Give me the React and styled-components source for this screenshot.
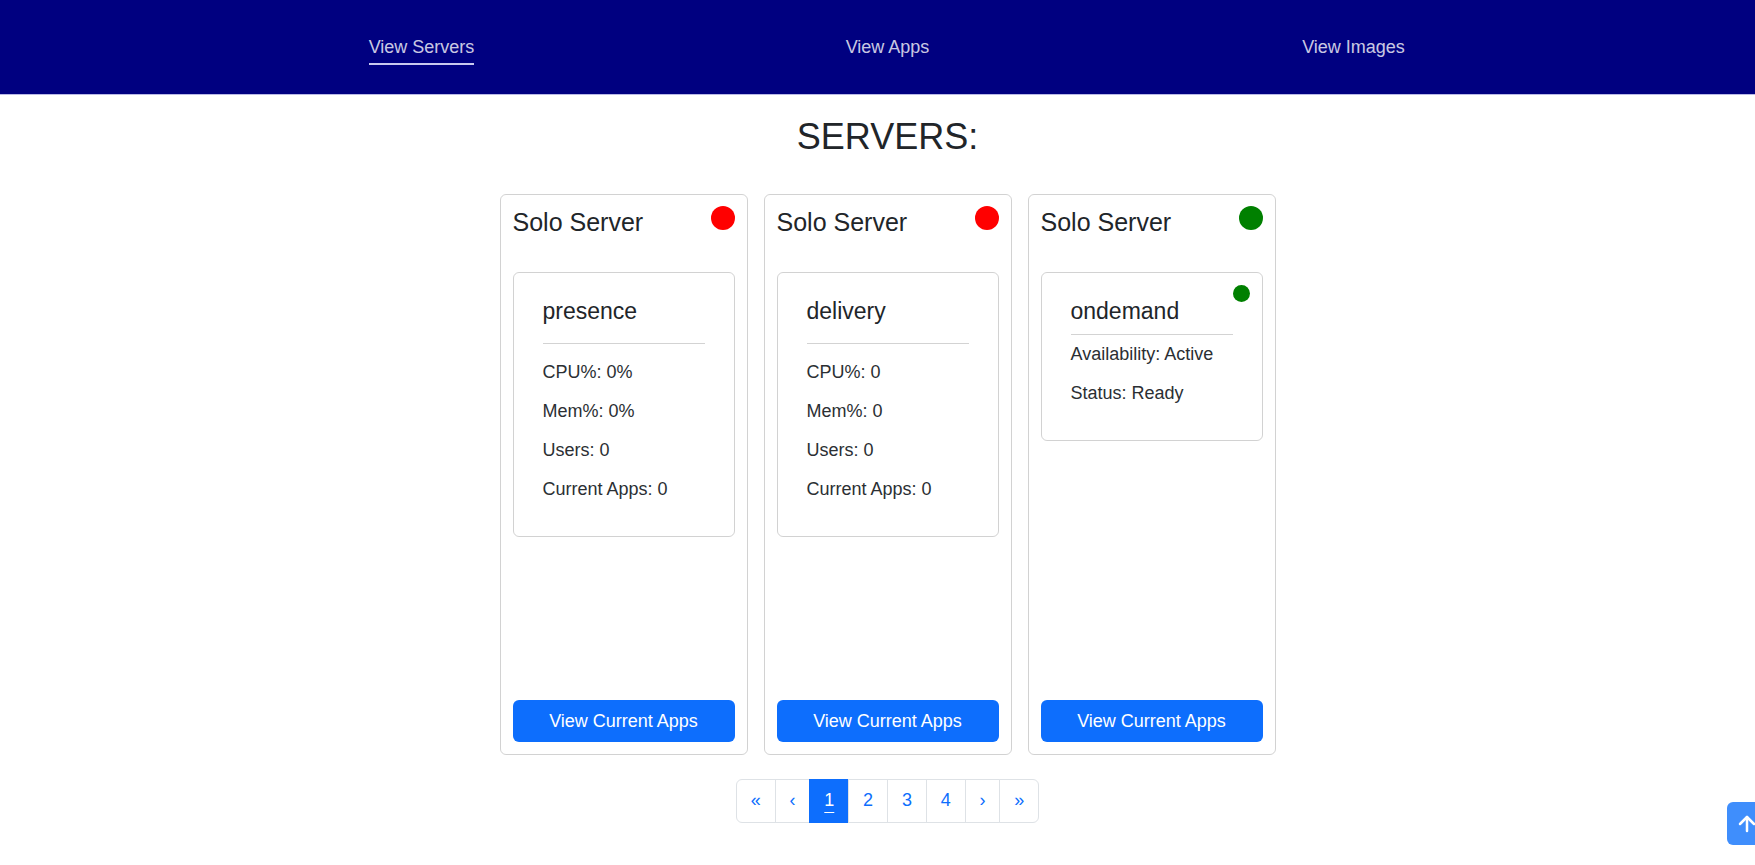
import React from "react"
import styled, { createGlobalStyle } from "styled-components"
import { ArrowUp } from "lucide-react"

const GlobalStyle = createGlobalStyle`
  html {
    overflow-x: hidden;
  }

  body {
    margin: 0;
    background: #fff;
    color: #212529;
    font-family: "Liberation Sans", Arial, sans-serif;
  }
`

const NavBar = styled.nav`
  background-color: #000080;
  border-bottom: 1px solid #b9b9e6;
  height: 94px;
  padding-left: 20px;
  box-sizing: content-box;
`

const NavList = styled.ul`
  display: grid;
  grid-template-columns: repeat(3, 466px);
  justify-content: center;
  justify-items: center;
  list-style: none;
  margin: 0;
  padding: 37px 0 0;
`

const NavLink = styled.a`
  display: block;
  font-size: 18px;
  line-height: 21px;
  padding-bottom: 5px;
  color: rgba(255, 255, 255, 0.8);
  text-decoration: none;
  border-bottom: 2px solid ${p => (p.$active ? "#c8c8ee" : "transparent")};
  cursor: pointer;
`

const Main = styled.main`
  padding-left: 20px;
  display: flex;
  flex-direction: column;
  align-items: center;
`

const Title = styled.h1`
  margin: 20px 0 36px;
  font-size: 36px;
  font-weight: 400;
  line-height: 43px;
  color: #212529;
`

const CardGrid = styled.div`
  display: grid;
  grid-template-columns: repeat(3, 248px);
  gap: 16px;
`

const ServerCard = styled.div`
  display: flex;
  flex-direction: column;
  box-sizing: border-box;
  height: 561px;
  padding: 12px;
  border: 1px solid rgba(0, 0, 0, 0.175);
  border-radius: 6px;
`

const CardHeader = styled.div`
  display: flex;
  justify-content: space-between;
  align-items: flex-start;
`

const CardTitle = styled.h4`
  margin: 0;
  font-size: 25px;
  font-weight: 400;
  line-height: 30px;
`

const StatusDot = styled.span`
  display: block;
  width: ${p => p.$size}px;
  height: ${p => p.$size}px;
  border-radius: 50%;
  background: ${p => (p.$on ? "#008000" : "#ff0000")};
  margin-top: -1px;
`

const AppCard = styled.div`
  position: relative;
  margin-top: 35px;
  padding: 25px 29px 21px;
  border: 1px solid rgba(0, 0, 0, 0.175);
  border-radius: 6px;
`

const AppDot = styled(StatusDot)`
  position: absolute;
  top: 12px;
  right: 12px;
  margin: 0;
`

const AppName = styled.h5`
  margin: 0;
  font-size: 23px;
  font-weight: 400;
  line-height: 27.6px;
`

const Rule = styled.hr`
  margin: ${p => (p.$compact ? "8px 0 6px" : "17px 0 15px")};
  border: 0;
  border-top: 1px solid #d3d3d3;
`

const Stat = styled.p`
  margin: 0 0 12px;
  font-size: 18px;
  line-height: 27px;
  color: #2b2f33;
`

const ActionButton = styled.button`
  margin-top: auto;
  height: 42px;
  border: 0;
  border-radius: 6px;
  background-color: #0d6efd;
  color: #fff;
  font-family: inherit;
  font-size: 18px;
  cursor: pointer;
`

const Pager = styled.ul`
  display: flex;
  list-style: none;
  margin: 24px 0 40px;
  padding: 0;
`

const PageItem = styled.li`
  a {
    display: block;
    padding: 7.25px 13.9px;
    font-size: 18px;
    line-height: 27px;
    color: ${p => (p.$active ? "#fff" : "#0d6efd")};
    background: ${p => (p.$active ? "#0d6efd" : "#fff")};
    border: 1px solid ${p => (p.$active ? "#0d6efd" : "#dee2e6")};
    margin-left: -1px;
    text-decoration: ${p => (p.$active ? "underline" : "none")};
    text-underline-offset: 6px;
  }

  &:first-child a {
    margin-left: 0;
    border-radius: 6px 0 0 6px;
  }

  &:last-child a {
    border-radius: 0 6px 6px 0;
  }
`

const ScrollTop = styled.button`
  position: fixed;
  left: 1727px;
  bottom: 20px;
  width: 40px;
  height: 43px;
  display: flex;
  align-items: center;
  justify-content: center;
  padding: 0;
  border: 0;
  border-radius: 6px;
  background-color: #3f8efc;
  color: #fff;
`

const servers = [
  {
    up: false,
    app: { name: "presence", stats: ["CPU%: 0%", "Mem%: 0%", "Users: 0", "Current Apps: 0"] },
  },
  {
    up: false,
    app: { name: "delivery", stats: ["CPU%: 0", "Mem%: 0", "Users: 0", "Current Apps: 0"] },
  },
  {
    up: true,
    app: { name: "ondemand", compact: true, stats: ["Availability: Active", "Status: Ready"] },
  },
]

const App = () => {
  return (
    <>
      <GlobalStyle />
      <NavBar>
        <NavList>
          <li><NavLink $active>View Servers</NavLink></li>
          <li><NavLink>View Apps</NavLink></li>
          <li><NavLink>View Images</NavLink></li>
        </NavList>
      </NavBar>
      <Main>
        <Title>SERVERS:</Title>
        <CardGrid>
          {servers.map((s, i) => (
            <ServerCard key={i}>
              <CardHeader>
                <CardTitle>Solo Server</CardTitle>
                <StatusDot $size={24} $on={s.up} />
              </CardHeader>
              <AppCard>
                {s.app.compact && <AppDot $size={17} $on />}
                <AppName>{s.app.name}</AppName>
                <Rule $compact={s.app.compact} />
                {s.app.stats.map(line => (
                  <Stat key={line}>{line}</Stat>
                ))}
              </AppCard>
              <ActionButton>View Current Apps</ActionButton>
            </ServerCard>
          ))}
        </CardGrid>
        <Pager>
          {["«", "‹", "1", "2", "3", "4", "›", "»"].map(label => (
            <PageItem key={label} $active={label === "1"}>
              <a>{label}</a>
            </PageItem>
          ))}
        </Pager>
      </Main>
      <ScrollTop>
        <ArrowUp size={24} strokeWidth={2.5} />
      </ScrollTop>
    </>
  )
}

export default App
